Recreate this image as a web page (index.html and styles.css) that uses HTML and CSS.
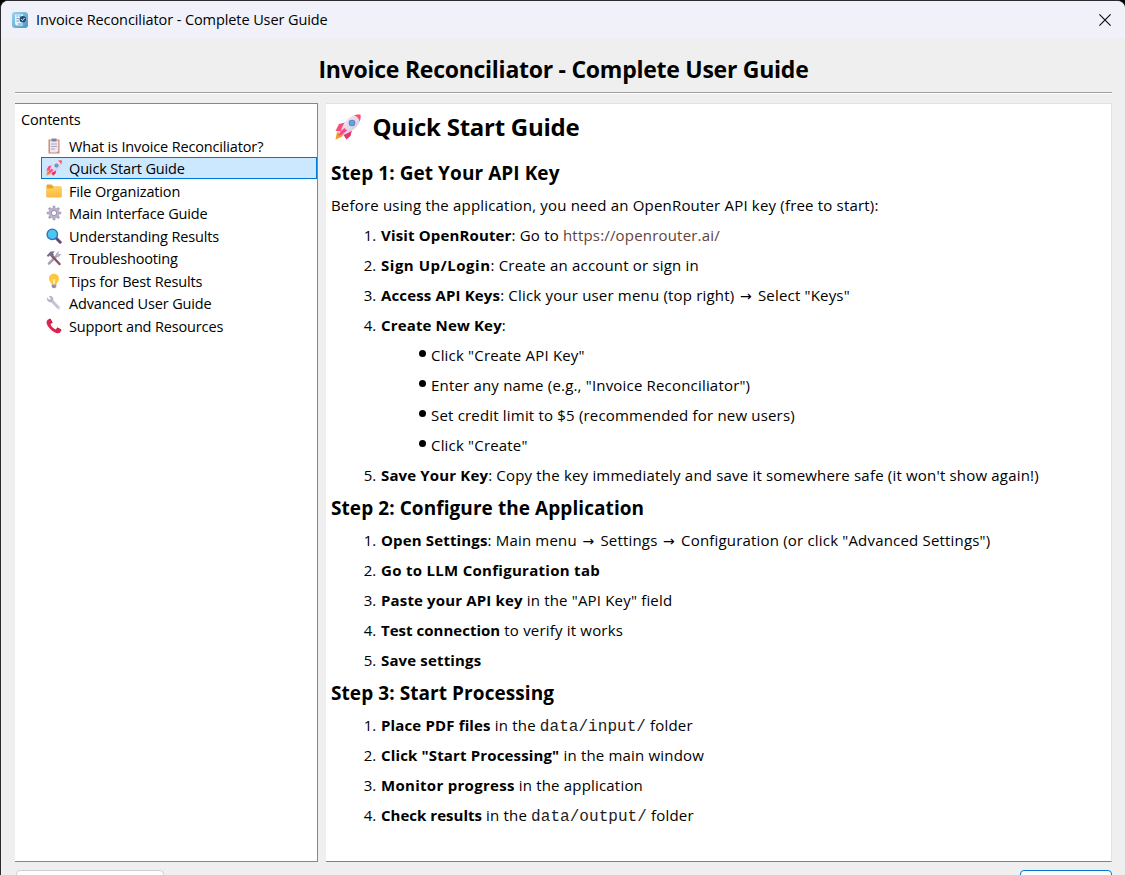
FILE: index.html
```html
<!DOCTYPE html>
<html lang="en">
<head>
<meta charset="utf-8">
<title>Invoice Reconciliator - Complete User Guide</title>
<link rel="stylesheet" href="styles.css">
</head>
<body>
<svg class="defs" width="0" height="0">
  <defs>
    <linearGradient id="hull" x1="0" y1="0" x2="1" y2="1"><stop offset="0" stop-color="#f4f0f8"/><stop offset="1" stop-color="#cfc2dc"/></linearGradient>
    <linearGradient id="folder" x1="0" y1="0" x2="0" y2="1"><stop offset="0" stop-color="#ffd35c"/><stop offset="1" stop-color="#fbb83c"/></linearGradient>
    <linearGradient id="app" x1="0" y1="0" x2="1" y2="1"><stop offset="0" stop-color="#9bd4f0"/><stop offset="1" stop-color="#4a94c8"/></linearGradient>
    <symbol id="rocket" viewBox="0 0 26 26">
      <path d="M2 18L9 20L6.500 23L.5 25.500Z" fill="#f59a2f"/>
      <path d="M10 8.500L4 10L.5 17L6 17.500Z" fill="#fb4a7b"/>
      <path d="M17 16L15.500 22L11.500 25.500L8.500 21Z" fill="#e8316f"/>
      <path d="M6 17C8 9 13 2 21 1L25.500 5C24.500 12 17 18 9 20.500Z" fill="url(#hull)"/>
      <path d="M19 1.300C21 .3 25 .2 25.500.8C26 2 25.600 5.500 24.700 7.500C24 4.500 22 2.300 19 1.300Z" fill="#fb4d68"/>
      <path d="M9.500 14L12 16.500L8 20L3 22L6 17Z" fill="#f04b8b"/>
      <circle cx="17" cy="9" r="3.300" fill="#6b7cae"/><circle cx="17" cy="9" r="2.400" fill="#58a8f0"/>
    </symbol>
  </defs>
</svg>
<div class="window">
  <header class="titlebar">
    <svg class="app-icon" viewBox="0 0 16 16">
      <rect width="16" height="16" rx="3" fill="url(#app)"/>
      <path d="M3 2.500H11V13.500H4L3 12Z" fill="#e2f2fa"/>
      <path d="M4.500 4H6M7 4H9M4.500 6.500H7M4.500 9H7M6 12H11" stroke="#65a4cc" stroke-width="1"/>
      <circle cx="10.800" cy="7.300" r="3.200" fill="#244e78"/>
      <path d="M9.200 7.200L10.500 8.500L12.600 6" fill="none" stroke="#dff1fb" stroke-width="1"/>
    </svg>
    <span class="titlebar-text">Invoice Reconciliator - Complete User Guide</span>
    <svg class="close" viewBox="0 0 12 12"><path d="M.4.400L11.600 11.600M11.600.4L.4 11.600" stroke="#111" stroke-width="1.200"/></svg>
  </header>
  <div class="page-title">Invoice Reconciliator - Complete User Guide</div>
  <main class="panes">
    <nav class="tree">
      <div class="tree-header">Contents</div>
      <div class="row"><svg class="icon" viewBox="0 0 16 16"><path d="M2.500 1.500H13.500V15.500H2.500Z" fill="#c98d72"/><path d="M4 2.500H12.300V13L10.500 14.500H4Z" fill="#ece8f4"/><path d="M5.500.5H10.500V3.500H5.500Z" fill="#8b819d"/><path d="M5 6H11M5 8.500H11M5 11H9" stroke="#aaa3ba"/></svg><span>What is Invoice Reconciliator?</span></div>
      <div class="row selected"><svg class="icon"><use href="#rocket"/></svg><span>Quick Start Guide</span></div>
      <div class="row"><svg class="icon" viewBox="0 0 16 16"><path d="M.5 2.500Q.5 1.500 1.500 1.500H5.500L7.500 3.500H14.500Q15.500 3.500 15.500 4.500V14H.5Z" fill="#eba42e"/><path d="M.5 5.500H6L8 4H15.500V13.500Q15.500 14.500 14.500 14.500H1.500Q.5 14.500.5 13.500Z" fill="url(#folder)"/></svg><span>File Organization</span></div>
      <div class="row"><svg class="icon" viewBox="0 0 16 16"><path d="M8 .8V15.200M.8 8H15.200M2.900 2.900L13.100 13.100M13.100 2.900L2.900 13.100" stroke="#aaa0bd" stroke-width="2.600"/><circle cx="8" cy="8" r="4.100" fill="none" stroke="#b9b0ca" stroke-width="3"/><circle cx="8" cy="8" r="2.600" fill="#fff" stroke="#8b809f" stroke-width=".8"/></svg><span>Main Interface Guide</span></div>
      <div class="row"><svg class="icon" viewBox="0 0 16 16"><path d="M10 10L14.200 14.200" stroke="#634977" stroke-width="3" stroke-linecap="round"/><circle cx="6.300" cy="6.300" r="5.200" fill="#50c5ef" stroke="#2877bd" stroke-width="1.400"/></svg><span>Understanding Results</span></div>
      <div class="row"><svg class="icon" viewBox="0 0 16 16"><path d="M3 13.500L11 5.500" stroke="#aaa1b7" stroke-width="2.500" stroke-linecap="round"/><path d="M10 3.500L13 1L12.500 4L15.500 4L13 7L10 6.500Z" fill="#b9b0c5"/><path d="M6 6L13.500 14" stroke="#8b5260" stroke-width="2.500" stroke-linecap="round"/><path d="M.8 5.500L4.500 1.500L9 1.200L7 3.200L8 5L5.500 7.500L4 5.500L2 7Z" fill="#77708a"/></svg><span>Troubleshooting</span></div>
      <div class="row"><svg class="icon" viewBox="0 0 16 16"><path d="M8 .8C4.800.8 3 3 3 5.800C3 8.300 5 9.300 5.500 11.500H10.500C11 9.300 13 8.300 13 5.800C13 3 11.200.8 8 .8Z" fill="#ffc640"/><path d="M7 6L8 11L9 6" stroke="#fff0a1" fill="none"/><path d="M5.700 11.500H10.300V14Q8 16.500 5.700 14Z" fill="#9b8eac"/></svg><span>Tips for Best Results</span></div>
      <div class="row"><svg class="icon" viewBox="0 0 16 16"><path d="M5 5L12.800 13" stroke="#c9c1d4" stroke-width="3" stroke-linecap="round"/><path d="M1 2.500L3.700 5L5 3.700L2.800 1.200C5.500.3 8 2.200 7.300 5L5.500 7.300C2.500 7.700.3 5.300 1 2.500Z" fill="#bdb4cb"/><circle cx="13" cy="13.200" r=".7" fill="#fff"/></svg><span>Advanced User Guide</span></div>
      <div class="row"><svg class="icon" viewBox="0 0 16 16"><path d="M2 1.500L4 .8L6.300 4.800L4.500 6.500C5.500 8.500 7.500 10.500 9.500 11.500L11.300 9.800L15.300 12L14.500 14C13.500 15.500 11 15.500 8.500 14.300C5 12.500 2.500 9.500 1 6.500C.2 4.500.5 2.500 2 1.500Z" fill="#dc244f"/><path d="M11.300 9.800L15.300 12M4 .8L6.300 4.800" stroke="#a51640"/></svg><span>Support and Resources</span></div>
    </nav>
    <article class="content">
      <h1><svg class="hero-icon"><use href="#rocket"/></svg><span>Quick Start Guide</span></h1>
      <h2>Step 1: Get Your API Key</h2>
      <p>Before using the application, you need an OpenRouter API key (free to start):</p>
      <ol>
        <li><b>Visit OpenRouter</b>: Go to <a>https://openrouter.ai/</a></li>
        <li><b class="wider">Sign Up/Login</b>: Create an account or sign in</li>
        <li><b>Access API Keys</b>: Click your user menu (top right) <i class="arrow">→</i> Select "Keys"</li>
        <li><b>Create New Key</b>:</li>
        <li class="nested">
          <ul>
            <li>Click "Create API Key"</li>
            <li>Enter any name (e.g., "Invoice Reconciliator")</li>
            <li>Set credit limit to $5 (recommended for new users)</li>
            <li>Click "Create"</li>
          </ul>
        </li>
        <li><b>Save Your Key</b>: Copy the key immediately and save it somewhere safe (it won't show again!)</li>
      </ol>
      <h2>Step 2: Configure the Application</h2>
      <ol>
        <li><b>Open Settings</b>: Main menu <i class="arrow">→</i> Settings <i class="arrow">→</i> Configuration (or click "Advanced Settings")</li>
        <li><b class="wide">Go to LLM Configuration tab</b></li>
        <li><b>Paste your API key</b> in the "API Key" field</li>
        <li><b class="snug">Test connection</b> to verify it works</li>
        <li><b>Save settings</b></li>
      </ol>
      <h2>Step 3: Start Processing</h2>
      <ol>
        <li><b>Place PDF files</b> in the <code>data/input/</code> folder</li>
        <li><b>Click "Start Processing"</b> in the main window</li>
        <li><b class="wide">Monitor progress</b> in the application</li>
        <li><b class="snug">Check results</b> in the <code>data/output/</code> folder</li>
      </ol>
    </article>
  </main>
  <footer class="buttons"><div class="button"></div><div class="button primary"></div></footer>
</div>
</body>
</html>
```
FILE: styles.css
```css
* { box-sizing: border-box; }
body { margin: 0; width: 1125px; height: 875px; overflow: hidden; background: #000; color: #000; font: 15px/22px "Open Sans", "Noto Sans", sans-serif; }
.defs { position: absolute; }
.window { height: 875px; border: solid #2b2b2e; border-width: 1px 0 0 1px; border-radius: 8px 8px 0 0; background: #efefef; overflow: hidden; display: flex; flex-direction: column; }
.titlebar { height: 37px; flex: none; display: flex; align-items: center; background: #f1f2f9; padding: 0 14px 0 11px; }
.app-icon { width: 16px; height: 16px; margin-right: 8px; }
.titlebar-text { flex: 1; letter-spacing: -.09px; font-size: 14.500px; }
.close { width: 12px; height: 12px; }
.page-title { flex: none; height: 55px; margin: 0 13px 0 14px; border-bottom: 1px solid #a0a0a0; box-shadow: 0 1px #fff; text-align: center; font-size: 23px; font-weight: 700; line-height: 63px; letter-spacing: -.26px; }
.panes { height: 759px; flex: none; margin: 10px 13px 0 14px; display: flex; gap: 8px; }
.tree { width: 303px; border: solid #828790; border-width: 1px 1px 1px 0; background: #fff; font-size: 14.500px; letter-spacing: -.15px; }
.tree-header { height: 30.500px; line-height: 31px; padding-left: 6px; letter-spacing: -.2px; }
.row { height: 22.500px; margin: 0 0 0 26px; padding-left: 4px; display: flex; align-items: center; gap: 7px; border: 1px solid transparent; border-width: 1px 0 1px 1px; }
.row:first-of-type span, .row span { padding-top: 1.500px; }
.row.selected { height: 22px; margin-bottom: .5px; background: #cce8ff; border: 1px solid #0078d7; }
.row.selected span { padding-top: 1px; }
.icon { width: 16px; height: 16px; flex: none; }
.content { flex: 1; border: solid #e3e3e3; border-width: 1px 1px 1px 0; border-bottom-color: #828282; background: #fff; padding-left: 5px; white-space: nowrap; letter-spacing: .185px; }
h1, h2, p, ol, ul { margin: 0; padding: 0; }
h1 { height: 51px; padding: 0 0 6px 4px; display: flex; align-items: center; gap: 11.500px; font-size: 24px; letter-spacing: -.25px; }
.hero-icon { width: 26px; height: 26px; }
h2 { height: 35px; font-size: 19px; line-height: 36px; letter-spacing: .07px; }
p { height: 30px; line-height: 31px; }
ol { counter-reset: step; padding-left: 50px; }
li { list-style: none; height: 30px; line-height: 31px; }
li.nested { height: 120px; }
ol > li:not(.nested) { counter-increment: step; }
ol > li:not(.nested)::before { content: counter(step) "."; display: inline-block; width: 45px; margin: 0 5px 0 -50px; text-align: right; letter-spacing: -.2px; }
ul { padding-left: 50px; }
ul > li::before { content: ""; display: inline-block; width: 7px; height: 7px; margin: 0 5px 6px -12px; border-radius: 50%; background: #000; vertical-align: middle; }
b { letter-spacing: .15px; }
.snug { letter-spacing: .02px; }
.wide { letter-spacing: .29px; }
.wider { letter-spacing: .52px; }
a { color: #62433b; }
.arrow { font: 14px/0 "DejaVu Sans", sans-serif; margin: 0 2px 0 1.500px; }
code { font: 16px/0 "Liberation Mono", monospace; letter-spacing: .05px; color: #222; }
.buttons { flex: 1; margin: 8px 13px 0 15px; display: flex; justify-content: space-between; }
.button { width: 148px; height: 30px; border: 1px solid #d0d0d0; border-radius: 4px; background: #fdfdfd; }
.primary { width: 92px; border-color: #0078d4; }
```
